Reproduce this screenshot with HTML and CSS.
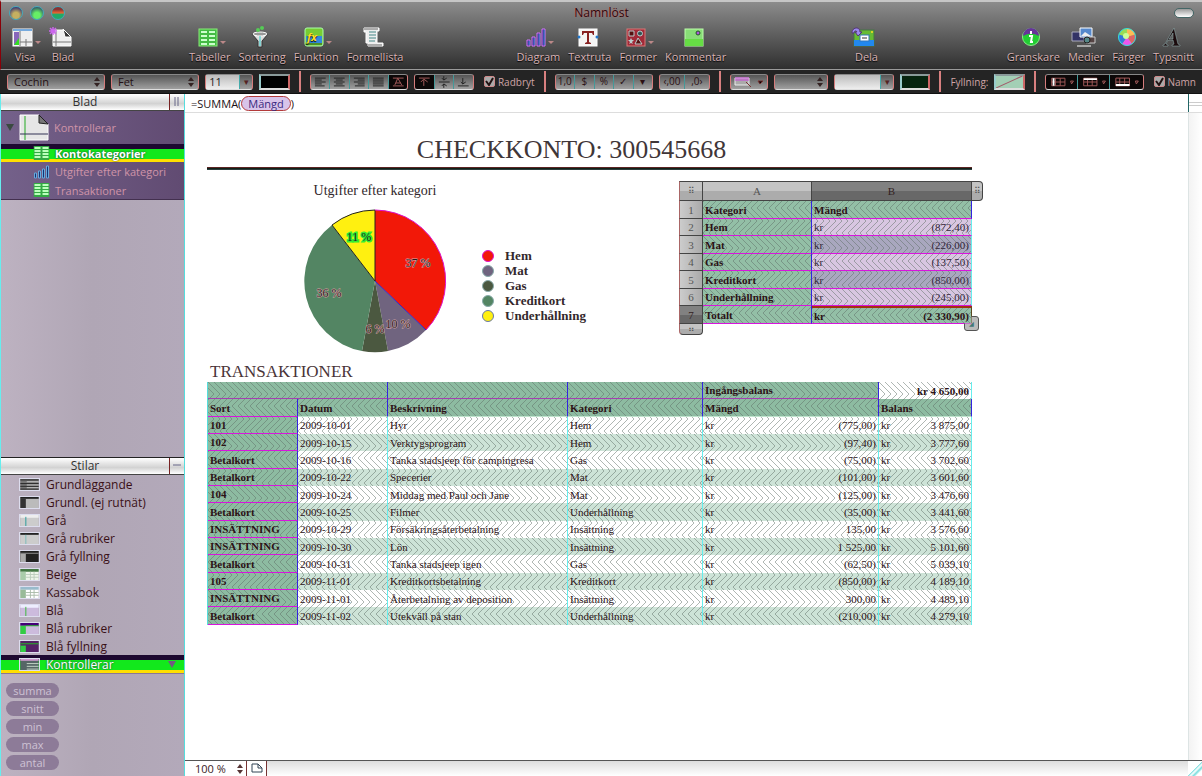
FILE: index.html
```
<!DOCTYPE html>
<html lang="sv">
<head>
    <meta charset="UTF-8">
    <meta name="viewport" content="width=device-width, initial-scale=1.0">
    <title>Namnlöst</title>
    <link rel="stylesheet" href="styles.css">
</head>
<body>
    <header class="window-head">
        <div class="titlebar">
            <div class="lights">
                <button class="light light-close" aria-label="Stäng"></button>
                <button class="light light-min" aria-label="Minimera"></button>
                <button class="light light-zoom" aria-label="Zooma"></button>
            </div>
            <div class="title">Namnlöst</div>
            <button class="pill-toggle" aria-label="Visa verktygsfält"></button>
        </div>
        <nav class="toolbar">
            <div class="tools tools-wide">
                <button class="tool has-menu">
                    <svg viewBox="0 0 22 22"><rect x="1" y="2" width="19" height="17" fill="#eee" stroke="#fff"/><rect x="1" y="2" width="19" height="2" fill="#7ad"/><rect x="2" y="5" width="5" height="13" fill="#86b"/><path d="M2 18l5-7v7z" fill="#3d2"/><path d="M8 4v15M8 15h12M14 12v7" stroke="#777" fill="none"/></svg>
                    Visa
                </button>
                <button class="tool">
                    <svg viewBox="0 0 22 22"><path d="M3 3h11l7 7v9H3z" fill="#eee" stroke="#fff"/><path d="M13 2l8 8h-6z" fill="#333" stroke="#fff"/><path d="M6 5v14M3 15h18" stroke="#777"/><path d="M3 0v8M-1 4h8M0 1l6 6M6 1L0 7" stroke="#c6e" stroke-width="1.5"/></svg>
                    Blad
                </button>
            </div>
            <span class="spacer"></span>
            <div class="tools">
                <button class="tool has-menu">
                    <svg viewBox="0 0 22 22"><rect x="2" y="2" width="18" height="17" fill="#4b4" stroke="#8e7"/><path d="M4 4h6v2H4zM12 4h6v2h-6zM4 8h6v2H4zM12 8h6v2h-6zM4 12h6v2H4zM12 12h6v2h-6zM4 16h6v2H4zM12 16h6v2h-6z" fill="#cfc"/></svg>
                    Tabeller
                </button>
                <button class="tool">
                    <svg viewBox="0 0 22 22"><path d="M3 7h16l-6 7v6H9v-6z" fill="#ddd" stroke="#333"/><ellipse cx="11" cy="7" rx="7" ry="2" fill="#999" stroke="#fff"/><circle cx="9" cy="3" r="2" fill="#5c5"/><circle cx="13" cy="1" r="2" fill="#5c5"/><path d="M11 9v10" stroke="#3cc"/></svg>
                    Sortering
                </button>
                <button class="tool has-menu">
                    <svg viewBox="0 0 22 22"><rect x="2" y="1" width="18" height="18" rx="2" fill="#7c3" stroke="#afa"/><rect x="3" y="9" width="16" height="7" fill="#38d"/><text x="4" y="14" font-size="11" font-style="italic" font-weight="bold" fill="#fd2">fx</text><path d="M3 17h16" stroke="#252"/></svg>
                    Funktion
                </button>
                <button class="tool">
                    <svg viewBox="0 0 22 22"><path d="M2 1h15v3h-2v12h6v3H6v-3H4V5H2z" fill="#eee" stroke="#fff"/><path d="M7 5h7M7 8h7M7 11h7M7 14h6" stroke="#488"/><path d="M2 2h14M6 18h14" stroke="#666"/></svg>
                    Formellista
                </button>
            </div>
            <span class="spacer"></span>
            <div class="tools">
                <button class="tool has-menu">
                    <svg viewBox="0 0 22 22"><path d="M2 13h3v6H2zM7 10h3v9H7zM12 6h3v13h-3zM17 2h3v17h-3z" fill="#427" stroke="#c7f"/><path d="M4 14v4M9 11v7M14 7v11M19 3v15" stroke="#38d"/></svg>
                    Diagram
                </button>
                <button class="tool">
                    <svg viewBox="0 0 22 22"><rect x="2" y="2" width="18" height="17" fill="#f4f4f4" stroke="#fff"/><path d="M5 4h12v4h-1l-1-2h-3v9l2 1v1H8v-1l2-1V6H7L6 8H5z" fill="#822"/><circle cx="2" cy="10" r="1.5" fill="#27c"/><circle cx="20" cy="10" r="1.5" fill="#27c"/></svg>
                    Textruta
                </button>
                <button class="tool has-menu">
                    <svg viewBox="0 0 22 22"><rect x="2" y="2" width="18" height="17" fill="#a12a38" stroke="#d77"/><path d="M4 4h5v5H4zM13 11l4 6h-7z" fill="#511" stroke="#bcc"/><circle cx="15" cy="6.5" r="2.5" fill="#355" stroke="#bcc"/><path d="M6 11l1 2h2l-2 2 1 2-2-1-2 1 1-2-2-2h2z" fill="#bcc"/></svg>
                    Former
                </button>
                <button class="tool">
                    <svg viewBox="0 0 22 22"><rect x="2" y="2" width="18" height="17" fill="#8d7" stroke="#bfa"/><path d="M2 12h18v7H2z" fill="#6d4"/><circle cx="15" cy="6" r="2" fill="#a5d" stroke="#252"/></svg>
                    Kommentar
                </button>
            </div>
            <span class="spacer spacer-wide"></span>
            <div class="tools">
                <button class="tool">
                    <svg viewBox="0 0 22 22"><rect x="1" y="3" width="20" height="16" fill="#6b3" stroke="#474"/><rect x="1" y="13" width="20" height="6" fill="#28e"/><rect x="7" y="8" width="9" height="6" fill="#fff" stroke="#37b"/><path d="M9 11h5" stroke="#333"/><path d="M-1 6c0-6 8-7 8-1h2L5 9 2 5h2c-1-2-3-1-3 1z" fill="#98e" stroke="#537"/><circle cx="19" cy="5" r="1" fill="#fd2"/></svg>
                    Dela
                </button>
            </div>
            <span class="spacer spacer-wide"></span>
            <div class="tools">
                <button class="tool">
                    <svg viewBox="0 0 22 22"><circle cx="11" cy="10" r="8.5" fill="#2c3" stroke="#8e8"/><path d="M3 9a8 8 0 0 1 16 0q-8-5-16 0z" fill="#639"/><path d="M11 4v3M9 9h3l-1 6h2" stroke="#fff" stroke-width="2" fill="none"/></svg>
                    Granskare
                </button>
                <button class="tool">
                    <svg viewBox="0 0 22 22"><path d="M-1 5h12v9H-1z" fill="#336" stroke="#aab"/><path d="M7 1h12v9H7z" fill="#58c" stroke="#fff"/><path d="M8 9l4-4 6 4z" fill="#eee"/><path d="M13 10h9v6h-9z" fill="#544" stroke="#ccc"/><path d="M4 19h14" stroke="#fff"/><circle cx="14" cy="13" r="3" fill="#588" stroke="#222"/></svg>
                    Medier
                </button>
                <button class="tool">
                    <svg viewBox="0 0 22 22"><circle cx="11" cy="10" r="8.5" fill="#9d5"/><path d="M11 10V1.500a8.500 8.500 0 0 1 8 6z" fill="#fb5"/><path d="M11 10l8-2.500a8.500 8.500 0 0 1-3 9.500z" fill="#d66"/><path d="M11 10l5 7a8.500 8.500 0 0 1-10 0z" fill="#e5e"/><path d="M11 10l-5 7a8.500 8.500 0 0 1-3-9.500z" fill="#37d"/><circle cx="11" cy="10" r="8.500" fill="none" stroke="#3dd"/><circle cx="10" cy="9" r="3" fill="#cf9"/></svg>
                    Färger
                </button>
                <button class="tool">
                    <svg viewBox="0 0 22 22"><path d="M13 1l4 16 2 1v1h-8v-1l2-1-1-4H7l-2 4 2 1v1H2v-1l2-1zm-1 5l-4 6h4z" fill="#1b0b0d" stroke="#9bb" stroke-width=".5"/></svg>
                    Typsnitt
                </button>
            </div>
        </nav>
    </header>

    <div class="formatbar">
        <select class="field font-name" aria-label="Typsnitt"><option>Cochin</option></select>
        <select class="field font-style" aria-label="Stil"><option>Fet</option></select>
        <div class="combo"><input class="size-input" type="text" value="11" aria-label="Storlek"><button class="combo-arrow" aria-label="Välj storlek">▾</button></div>
        <button class="swatch swatch-black" aria-label="Textfärg"></button>
        <span class="divider"></span>
        <div class="segments">
            <button aria-label="Vänster"><svg viewBox="0 0 19 14"><path d="M4 3h11M4 5h7M4 7h11M4 9h7M4 11h10"/></svg></button>
            <button aria-label="Centrera"><svg viewBox="0 0 19 14"><path d="M4 3h11M6 5h7M4 7h11M6 9h7M4 11h11"/></svg></button>
            <button aria-label="Höger"><svg viewBox="0 0 19 14"><path d="M4 3h11M8 5h7M4 7h11M8 9h7M5 11h10"/></svg></button>
            <button aria-label="Marginaljustera"><svg viewBox="0 0 19 14"><path d="M4 3h11M4 5h11M4 7h11M4 9h11M4 11h11"/></svg></button>
            <button class="on" aria-label="Automatisk"><svg viewBox="0 0 19 14"><path d="M4 3h11M4 11h11M6 10l3-7 4 7M7 8h5"/></svg></button>
        </div>
        <div class="segments">
            <button class="on" aria-label="Överkant"><svg viewBox="0 0 19 14"><path d="M4 3h11M9 11V5M6 7l3-3 4 3"/></svg></button>
            <button aria-label="Mitten"><svg viewBox="0 0 19 14"><path d="M4 7h11M9 1v4M7 3l2 2 3-2M9 13V9M7 11l2-2 3 2"/></svg></button>
            <button aria-label="Underkant"><svg viewBox="0 0 19 14"><path d="M4 11h11M9 3v6M7 7l2 2 3-2"/></svg></button>
        </div>
        <label class="check"><input type="checkbox" checked>Radbryt</label>
        <span class="divider"></span>
        <div class="segments">
            <button>1,0</button>
            <button>$</button>
            <button>%</button>
            <button>✓</button>
            <button>▾</button>
        </div>
        <div class="segments segments-wide">
            <button>‹,00</button>
            <button>,0›</button>
        </div>
        <span class="divider"></span>
        <button class="field border-menu" aria-label="Kantlinje"><svg viewBox="0 0 34 12"><path d="M3 2h14v7H3z" fill="#aaa" stroke="#eee"/><path d="M3 2h14M3 4h14" stroke="#c4d"/><path d="M14 6l5 5M26 5h5l-3 3z" stroke="#733"/></svg></button>
        <select class="field line-style" aria-label="Linje"><option></option></select>
        <div class="combo"><input class="line-input" type="text" aria-label="Linjebredd"><button class="combo-arrow" aria-label="Välj linjebredd">▾</button></div>
        <button class="swatch swatch-green" aria-label="Linjefärg"></button>
        <span class="divider"></span>
        <span class="fill-label">Fyllning:</span>
        <button class="swatch swatch-fill" aria-label="Fyllning"><svg viewBox="0 0 27 11" preserveAspectRatio="none"><path d="M0 11L27 0" stroke="#a25a6a"/></svg></button>
        <span class="divider"></span>
        <div class="segments segments-table">
            <button class="on" aria-label="Rubrikkolumner"><svg viewBox="0 0 33 14"><path d="M6 3h14v8H6zM10 3v8M15 3v8M6 7h14M26 6h3l-2 3z"/><path class="hot" d="M8 3v8"/></svg></button>
            <button class="on" aria-label="Rubriker"><svg viewBox="0 0 33 14"><path d="M6 3h14v8H6zM10 3v8M15 3v8M6 7h14M26 6h3l-2 3z"/><path class="hot" d="M6 4h14"/></svg></button>
            <button class="on" aria-label="Sidfötter"><svg viewBox="0 0 33 14"><path d="M6 3h14v8H6zM10 3v8M15 3v8M6 7h14M26 6h3l-2 3z"/><path class="hot" d="M6 10h14"/></svg></button>
        </div>
        <label class="check"><input type="checkbox" checked>Namn</label>
    </div>

    <div class="workspace">
        <aside class="sidebar">
            <div class="side-head"><h2>Blad</h2><button aria-label="Ändra bredd"><svg viewBox="0 0 14 14"><path d="M5 2v9M8 2v9"/></svg></button></div>
            <ul class="sheets">
                <li class="sheet-root">
                    <span class="arrow"></span>
                    <svg class="sheet-icon" viewBox="0 0 30 28"><path d="M1 1h19l9 9v16H1z" fill="#e6e6e6" stroke="#fff"/><path d="M20 1l9 9-9-1z" fill="#777" stroke="#222"/><path d="M6 2v24" stroke="#2a2"/><path d="M1 20h28" stroke="#335"/></svg>
                    <span>Kontrollerar</span>
                </li>
                <li class="selected"><svg viewBox="0 0 16 14"><use href="#table-icon"/></svg><span>Kontokategorier</span></li>
                <li><svg viewBox="0 0 16 14"><path d="M1 8h2v5H1zM5 6h2v7H5zM9 4h2v9H9zM13 1h2v12h-2z" fill="#137" stroke="#6ad"/></svg><span>Utgifter efter kategori</span></li>
                <li><svg viewBox="0 0 16 14"><use href="#table-icon"/></svg><span>Transaktioner</span></li>
            </ul>

            <div class="side-head"><h2>Stilar</h2><button aria-label="Dölj stilar"><svg viewBox="0 0 14 14"><path d="M3 6h8"/></svg></button></div>
            <ul class="styles">
                <li><svg viewBox="0 0 20 12"><rect width="20" height="12" fill="#777"/><path d="M0 1h20M0 5h20M0 8h20M0 11h20" stroke="#222"/><path d="M7 3h13M7 6.500h13M7 9.500h13" stroke="#ccc"/></svg>Grundläggande</li>
                <li><svg viewBox="0 0 20 12"><rect width="20" height="12" fill="#bbb"/><path d="M0 1h20" stroke="#222" stroke-width="2"/><rect y="2" width="6" height="10" fill="#333"/></svg>Grundl. (ej rutnät)</li>
                <li><svg viewBox="0 0 20 12"><rect width="20" height="12" fill="#ccc"/><rect width="20" height="3" fill="#eee"/><path d="M6 2v10" stroke="#299"/></svg>Grå</li>
                <li><svg viewBox="0 0 20 12"><rect width="20" height="12" fill="#ccc"/><path d="M0 1h20" stroke="#222" stroke-width="2"/><path d="M6 2v10" stroke="#7bb"/></svg>Grå rubriker</li>
                <li><svg viewBox="0 0 20 12"><rect width="20" height="12" fill="#222"/><rect y="3" width="6" height="9" fill="#aaa"/><path d="M0 2.500h20" stroke="#999"/></svg>Grå fyllning</li>
                <li><svg viewBox="0 0 20 12"><rect width="20" height="12" fill="#eef5ea"/><rect width="20" height="3" fill="#474"/><rect y="3" width="6" height="9" fill="#aca"/><path d="M6 6h14M6 9h14M11 3v9M15 3v9" stroke="#bcb"/></svg>Beige</li>
                <li><svg viewBox="0 0 20 12"><rect width="20" height="12" fill="#fff"/><rect width="20" height="3" fill="#9bc"/><rect y="3" width="6" height="9" fill="#9b9"/><path d="M6 6h14M6 9h14M11 3v9M15 3v9" stroke="#aba"/></svg>Kassabok</li>
                <li><svg viewBox="0 0 20 12"><rect width="20" height="12" fill="#cbd"/><rect width="20" height="3" fill="#eef"/><path d="M6 2v10" stroke="#3b3"/></svg>Blå</li>
                <li><svg viewBox="0 0 20 12"><rect width="20" height="12" fill="#cbd"/><rect width="20" height="3" fill="#407"/><rect y="3" width="6" height="9" fill="#3c4"/><path d="M6 3h14" stroke="#2b2"/></svg>Blå rubriker</li>
                <li><svg viewBox="0 0 20 12"><rect width="20" height="12" fill="#526"/><rect y="5" width="6" height="7" fill="#3c4"/><path d="M0 3h20" stroke="#2b2"/></svg>Blå fyllning</li>
                <li class="selected"><svg viewBox="0 0 20 12"><rect width="20" height="12" fill="#566"/><path d="M0 1h20" stroke="#c9c" stroke-width="2"/><path d="M7 5h13M7 8h13M7 11h13" stroke="#cdc"/></svg>Kontrollerar<span class="arrow"></span></li>
            </ul>
            <div class="functions">
                <button>summa</button>
                <button>snitt</button>
                <button>min</button>
                <button>max</button>
                <button>antal</button>
            </div>
        </aside>

        <main class="document">
            <div class="formula">
                <span>=SUMMA(</span><span class="token">Mängd</span><span>)</span>
                <span class="split"></span>
            </div>
            <div class="canvas">
                <div class="sheet">
                    <h1>CHECKKONTO: 300545668</h1>
                    <div class="overview">
                        <div class="chart">
                            <h3>Utgifter efter kategori</h3>
                            <svg class="pie" viewBox="-72 -72 144 144">
                                <path d="M0 0V-71A71 71 0 0 1 51 49z" fill="#f21808"/>
                                <path d="M0 0L51 49A71 71 0 0 1 13 70z" fill="#70647f"/>
                                <path d="M0 0L13 70A71 71 0 0 1-13 70z" fill="#4b5840"/>
                                <path d="M0 0L-13 70A71 71 0 0 1-43-56z" fill="#538563"/>
                                <path d="M0 0L-43-56A71 71 0 0 1 0-71z" fill="#fff010"/>
                                <path d="M0-71V0L-43-56A71 71 0 0 1 0-71" fill="none" stroke="#222"/>
                                <path d="M0-71A71 71 0 0 1 51 49" fill="none" stroke="#d1c"/>
                                <path d="M0 0L51 49" stroke="#32c"/>
                                <text x="43" y="-14">37 %</text>
                                <text x="23" y="47">10 %</text>
                                <text x="0" y="52">6 %</text>
                                <text x="-46" y="16">36 %</text>
                                <text class="halo" x="-16" y="-40">11 %</text>
                            </svg>
                            <ul class="legend">
                                <li><i class="dot dot-hem"></i>Hem</li>
                                <li><i class="dot dot-mat"></i>Mat</li>
                                <li><i class="dot dot-gas"></i>Gas</li>
                                <li><i class="dot dot-kredit"></i>Kreditkort</li>
                                <li><i class="dot dot-under"></i>Underhållning</li>
                            </ul>
                        </div>

                        <table class="categories">
                            <colgroup><col class="c-num"><col class="c-a"><col class="c-b"><col class="c-tail"></colgroup>
                            <tr class="letters"><th class="grip">⠿</th><th>A</th><th class="active">B</th><th class="grip tail">⠿</th></tr>
                            <tr><th class="num">1</th><th class="name">Kategori</th><th class="name">Mängd</th></tr>
                            <tr><th class="num">2</th><th class="name">Hem</th><td><div class="money"><span>kr</span><span>(872,40)</span></div></td></tr>
                            <tr><th class="num">3</th><th class="name">Mat</th><td><div class="money"><span>kr</span><span>(226,00)</span></div></td></tr>
                            <tr><th class="num">4</th><th class="name">Gas</th><td><div class="money"><span>kr</span><span>(137,50)</span></div></td></tr>
                            <tr><th class="num">5</th><th class="name">Kreditkort</th><td><div class="money"><span>kr</span><span>(850,00)</span></div></td></tr>
                            <tr><th class="num">6</th><th class="name">Underhållning</th><td><div class="money"><span>kr</span><span>(245,00)</span></div></td></tr>
                            <tr class="total"><th class="num active">7</th><th class="name">Totalt</th><td><div class="money"><span>kr</span><span>(2 330,90)</span></div><span class="handle">◢</span></td></tr>
                            <tr class="foot"><th class="grip">⠶</th></tr>
                        </table>
                    </div>

                    <h2 class="table-title">TRANSAKTIONER</h2>
                    <table class="transactions">
                        <colgroup><col class="t-sort"><col class="t-date"><col class="t-desc"><col class="t-cat"><col class="t-sum"><col class="t-bal"></colgroup>
                        <tr class="head"><th colspan="2"></th><th></th><th></th><th>Ingångsbalans</th><td class="opening">kr 4 650,00</td></tr>
                        <tr class="head"><th>Sort</th><th>Datum</th><th>Beskrivning</th><th>Kategori</th><th>Mängd</th><th>Balans</th></tr>
                        <tr><th>101</th><td>2009-10-01</td><td>Hyr</td><td>Hem</td><td><div class="money"><span>kr</span><span>(775,00)</span></div></td><td><div class="money"><span>kr</span><span>3 875,00</span></div></td></tr>
                        <tr><th>102</th><td>2009-10-15</td><td>Verktygsprogram</td><td>Hem</td><td><div class="money"><span>kr</span><span>(97,40)</span></div></td><td><div class="money"><span>kr</span><span>3 777,60</span></div></td></tr>
                        <tr><th>Betalkort</th><td>2009-10-16</td><td>Tanka stadsjeep för campingresa</td><td>Gas</td><td><div class="money"><span>kr</span><span>(75,00)</span></div></td><td><div class="money"><span>kr</span><span>3 702,60</span></div></td></tr>
                        <tr><th>Betalkort</th><td>2009-10-22</td><td>Specerier</td><td>Mat</td><td><div class="money"><span>kr</span><span>(101,00)</span></div></td><td><div class="money"><span>kr</span><span>3 601,60</span></div></td></tr>
                        <tr><th>104</th><td>2009-10-24</td><td>Middag med Paul och Jane</td><td>Mat</td><td><div class="money"><span>kr</span><span>(125,00)</span></div></td><td><div class="money"><span>kr</span><span>3 476,60</span></div></td></tr>
                        <tr><th>Betalkort</th><td>2009-10-25</td><td>Filmer</td><td>Underhållning</td><td><div class="money"><span>kr</span><span>(35,00)</span></div></td><td><div class="money"><span>kr</span><span>3 441,60</span></div></td></tr>
                        <tr><th>INSÄTTNING</th><td>2009-10-29</td><td>Försäkringsåterbetalning</td><td>Insättning</td><td><div class="money"><span>kr</span><span>135,00</span></div></td><td><div class="money"><span>kr</span><span>3 576,60</span></div></td></tr>
                        <tr><th>INSÄTTNING</th><td>2009-10-30</td><td>Lön</td><td>Insättning</td><td><div class="money"><span>kr</span><span>1 525,00</span></div></td><td><div class="money"><span>kr</span><span>5 101,60</span></div></td></tr>
                        <tr><th>Betalkort</th><td>2009-10-31</td><td>Tanka stadsjeep igen</td><td>Gas</td><td><div class="money"><span>kr</span><span>(62,50)</span></div></td><td><div class="money"><span>kr</span><span>5 039,10</span></div></td></tr>
                        <tr><th>105</th><td>2009-11-01</td><td>Kreditkortsbetalning</td><td>Kreditkort</td><td><div class="money"><span>kr</span><span>(850,00)</span></div></td><td><div class="money"><span>kr</span><span>4 189,10</span></div></td></tr>
                        <tr><th>INSÄTTNING</th><td>2009-11-01</td><td>Återbetalning av deposition</td><td>Insättning</td><td><div class="money"><span>kr</span><span>300,00</span></div></td><td><div class="money"><span>kr</span><span>4 489,10</span></div></td></tr>
                        <tr><th>Betalkort</th><td>2009-11-02</td><td>Utekväll på stan</td><td>Underhållning</td><td><div class="money"><span>kr</span><span>(210,00)</span></div></td><td><div class="money"><span>kr</span><span>4 279,10</span></div></td></tr>
                    </table>
                </div>
                <div class="scroll-y"></div>
            </div>
            <div class="statusbar">
                <button class="zoom">100 %<svg viewBox="0 0 8 10"><path d="M1 4l3-4 3 4zM1 6l3 4 3-4z" fill="#533"/></svg></button>
                <button class="page-view" aria-label="Utskriftsvy"><svg viewBox="0 0 12 10"><path d="M1 1h6l4 4v4H1zM7 1v4h4" fill="none" stroke="#345"/></svg></button>
                <span class="scroll-x"></span>
                <span class="resize"></span>
            </div>
        </main>
    </div>

    <svg class="defs" width="0" height="0">
        <symbol id="table-icon" viewBox="0 0 16 14"><rect width="16" height="14" fill="#3a4"/><path d="M1 2h6M9 2h6M1 5h6M9 5h6M1 8h6M9 8h6M1 11h6M9 11h6" stroke="#bfb" stroke-width="2"/></symbol>
    </svg>
</body>
</html>
```
FILE: styles.css
```
* {
    box-sizing: border-box;
}

body {
    margin: 0;
    height: 100vh;
    display: flex;
    flex-direction: column;
    overflow: hidden;
    background: #fff;
    color: #1c1216;
    font-family: "Open Sans", "Noto Sans", sans-serif;
    font-size: 12px;
}

button, input, select {
    font-family: inherit;
    font-size: 11px;
    margin: 0;
    padding: 0;
    border: none;
    background: none;
    color: inherit;
}

ul {
    list-style: none;
    margin: 0;
    padding: 0;
}

h1, h2, h3 {
    margin: 0;
    font-weight: normal;
}

.defs {
    position: absolute;
}

/* window head */
.window-head {
    height: 70px;
    border-top: 2px solid #c6c6c6;
    border-bottom: 1px solid #9a9a9a;
    border-left: 1px solid #8a0008;
    background: linear-gradient(#8c8c8c, #2f2f2f);
}

.titlebar {
    display: grid;
    grid-template-columns: 1fr auto 1fr;
    align-items: center;
    height: 21px;
    padding: 0 8px;
}

.lights {
    display: flex;
    gap: 7px;
}

.light {
    width: 14px;
    height: 14px;
    border-radius: 50%;
    border: 1px solid #4ab;
}

.light-close {
    background: radial-gradient(circle at 50% 70%, #c4b060 30%, #3c3470 80%);
}

.light-min {
    background: radial-gradient(circle at 50% 70%, #6e6 30%, #356 80%);
}

.light-zoom {
    background: linear-gradient(#833 20%, #e63 50%, #2a6 60%);
}

.title {
    font-size: 12px;
    color: #240a0e;
    text-shadow: 0 0 1px #e66;
}

.pill-toggle {
    justify-self: end;
    width: 20px;
    height: 10px;
    border-radius: 5px;
    border: 1px solid #466;
    background: linear-gradient(#999, #fff);
}

.toolbar {
    display: flex;
    padding: 4px 8px 0 11px;
}

.tools {
    display: flex;
    gap: 8px;
}

.tools-wide {
    gap: 12px;
}

.spacer {
    flex: 8;
}

.spacer-wide {
    flex: 9;
}

.tool {
    position: relative;
    display: flex;
    flex-direction: column;
    align-items: center;
    line-height: 16px;
    color: #d8b2b4;
    text-shadow: 0 1px 1px #000;
}

.tool svg {
    width: 22px;
    height: 22px;
    margin-right: 4px;
    overflow: visible;
}

.has-menu::after {
    content: "";
    position: absolute;
    top: 14px;
    left: 50%;
    margin-left: 10px;
    border: 3px solid transparent;
    border-top-color: #b88;
}

/* format bar */
.formatbar {
    display: flex;
    align-items: center;
    gap: 6px;
    height: 24px;
    padding: 0 6px 0 7px;
    background: #242424;
    border-bottom: 1px solid #111;
}

.divider {
    width: 2px;
    height: 21px;
    margin: 0 3px;
    background: #d88080;
}

.field, .segments, .combo, .swatch {
    height: 16px;
    border: 1px solid #999;
    border-color: #888 #d57c7c #ddd #d57c7c;
    border-radius: 3px;
    background: linear-gradient(#555, #a0a0a0);
}

.field {
    appearance: none;
    padding: 0 6px;
    color: #241015;
    line-height: 13px;
}

select.field {
    background:
        url("data:image/svg+xml,%3Csvg xmlns='http://www.w3.org/2000/svg' width='6' height='10'%3E%3Cpath d='M0 4l3-4 3 4zM0 6l3 4 3-4z' fill='%23322'/%3E%3C/svg%3E") no-repeat right 4px center,
        linear-gradient(#555, #a0a0a0);
}

.font-name {
    width: 100px;
}

.font-style {
    width: 90px;
}

.line-style {
    width: 55px;
}

.combo {
    display: flex;
}

.combo input {
    background: linear-gradient(#bbb, #eee);
    color: #222;
}

.size-input {
    width: 33px;
    padding: 0 3px;
}

.line-input {
    width: 45px;
}

.combo-arrow {
    width: 13px;
    border-left: 1px solid #4aa;
    color: #522;
    font-size: 9px;
    line-height: 12px;
}

.swatch {
    width: 31px;
    border: 2px solid #999;
    border-color: #8a9a9a #c66 #ddd #9cc;
    border-radius: 0;
}

.swatch svg {
    display: block;
    width: 100%;
    height: 100%;
}

.swatch-black {
    background: #000;
}

.swatch-green {
    background: #06240f;
}

.swatch-fill {
    background: #a3cfb5;
}

.segments {
    display: flex;
    overflow: hidden;
}

.segments button {
    width: 20px;
    color: #2b1014;
    font-size: 10px;
    line-height: 13px;
    border-right: 1px solid #499;
}

.segments button:last-child {
    width: 19px;
    border-right: none;
}

.segments.segments-wide button {
    width: 25px;
}

.segments.segments-table button {
    width: 33px;
}

.segments svg {
    display: block;
    width: 100%;
    height: 14px;
    fill: none;
    stroke: #222;
}

.segments .on {
    background: #0c0808;
}

.segments .on svg {
    stroke: #a35a5a;
}

.segments .on .hot {
    stroke: #fff;
    stroke-width: 2;
}

.check {
    display: flex;
    align-items: center;
    gap: 3px;
    margin-left: 4px;
    font-size: 10px;
    color: #cfa4a6;
}

.check input {
    appearance: none;
    width: 11px;
    height: 11px;
    border: 1px solid #c88;
    border-radius: 2px;
    background: #aaa url("data:image/svg+xml,%3Csvg xmlns='http://www.w3.org/2000/svg' width='9' height='9'%3E%3Cpath d='M1 4l3 4 4-7' fill='none' stroke='%23211' stroke-width='2'/%3E%3C/svg%3E") center no-repeat;
}

.fill-label {
    font-size: 10px;
    color: #cfa4a6;
}

.border-menu {
    width: 38px;
    padding: 0 1px;
}

.border-menu svg {
    display: block;
    width: 34px;
    height: 12px;
}

/* workspace */
.workspace {
    flex: 1;
    display: flex;
    min-height: 0;
}

.sidebar {
    width: 185px;
    display: flex;
    flex-direction: column;
    border-left: 1px solid #6ee;
    border-right: 1px solid #5dd;
    background: linear-gradient(90deg, #bdb2c1, #b0a6b5 50%, #b3a9ba);
}

.side-head {
    display: flex;
    height: 17px;
    border-bottom: 1px solid #444;
    background: linear-gradient(#fff, #d2d2d2 60%, #fff);
}

.side-head h2 {
    flex: 1;
    font-size: 12px;
    line-height: 16px;
    text-align: center;
    color: #333;
}

.side-head button {
    width: 15px;
    border-left: 1px solid #722;
}

.side-head svg {
    display: block;
    width: 14px;
    height: 14px;
    stroke: #668;
}

.sheets {
    flex: 1;
    font-size: 11px;
}

.sheets li {
    display: flex;
    align-items: center;
    gap: 5px;
    height: 19px;
    padding-left: 32px;
    background: linear-gradient(90deg, #74618a, #614b72);
    color: #cf94a8;
}

.sheets li:last-child {
    border-bottom: 1px solid #43304f;
}

.sheets li svg {
    width: 17px;
    height: 14px;
}

.sheets .sheet-root {
    height: 33px;
    padding-left: 5px;
}

.sheets .sheet-icon {
    width: 30px;
    height: 28px;
}

.arrow {
    border: 4px solid transparent;
    border-top: 7px solid #3a4a40;
    border-bottom: none;
}

.sheets .selected, .styles .selected {
    background: linear-gradient(#1d0930 5px, #12e81c 5px, #12e81c 15px, #ffdf00 15px);
    color: #fff;
    text-shadow: 0 0 2px #224;
}

.sheets .selected {
    font-weight: bold;
    height: 18px;
}

.sidebar .side-head:not(:first-child) {
    height: 18px;
    border-top: 1px solid #222;
}

.styles li {
    display: flex;
    align-items: center;
    gap: 6px;
    height: 18px;
    padding-left: 18px;
    color: #3a1016;
}

.styles svg {
    width: 21px;
    height: 13px;
    border: 1px solid #dde;
}

.styles .arrow {
    margin-left: auto;
    margin-right: 8px;
    border-top-color: #725a80;
}

.functions {
    display: flex;
    flex-direction: column;
    gap: 3px;
    padding: 9px 5px 6px;
    border-top: 1px solid #8a7794;
}

.functions button {
    width: 53px;
    height: 15px;
    border-radius: 8px;
    background: #8d7b98;
    color: #cdc2d4;
    line-height: 13px;
}

/* document */
.document {
    flex: 1;
    display: flex;
    flex-direction: column;
    min-width: 0;
}

.formula {
    display: flex;
    align-items: center;
    height: 19px;
    padding-left: 6px;
    border-bottom: 1px solid #ddd;
    font-size: 11px;
}

.token {
    padding: 0 6px;
    line-height: 13px;
    border: 1px solid #b33a3a;
    border-radius: 8px;
    background: #d8c4ea;
    color: #3a2a80;
}

.split {
    width: 14px;
    height: 18px;
    margin-left: auto;
    border-left: 1px solid #266;
    background: linear-gradient(transparent 8px, #ccc 8px, #ccc 9px, transparent 9px, transparent 11px, #ccc 11px, #ccc 12px, transparent 12px);
}

.canvas {
    flex: 1;
    display: flex;
    min-height: 0;
    font-family: "Liberation Serif", serif;
}

.sheet {
    flex: 1;
    max-width: 787px;
    padding: 22px 0 0 22px;
}

.scroll-y {
    width: 14px;
    margin-left: auto;
    border-left: 1px solid #dde4e4;
    background: linear-gradient(90deg, #f3f3f3, #fff);
}

h1 {
    position: relative;
    padding: 0 36px 2px 0;
    font-size: 26px;
    line-height: 30px;
    text-align: center;
    color: #3f3638;
}

/* rule under the sheet title */
h1::after {
    content: "";
    position: absolute;
    left: 0;
    right: 0;
    top: 100%;
    height: 3px;
    background: linear-gradient(#5c2424 1px, #102018 1px, #102018 2px, #2c3c3c 2px);
}

.overview {
    display: flex;
    justify-content: space-between;
    align-items: flex-start;
    padding: 14px 0 0 96px;
}

.chart {
    display: grid;
    grid-template-columns: 144px auto;
    column-gap: 35px;
    row-gap: 8px;
}

.chart h3 {
    grid-column: 1;
    font-size: 14px;
    line-height: 20px;
    text-align: center;
    color: #32282c;
}

.pie {
    grid-column: 1;
    width: 144px;
    height: 144px;
}

.pie text {
    font-size: 12px;
    text-anchor: middle;
    fill: #241a1e;
    stroke: #d9a8a8;
    stroke-width: 1px;
    paint-order: stroke;
}

.pie .halo {
    stroke: #3e3;
    stroke-width: 3px;
}

.legend {
    grid-column: 2;
    align-self: center;
    padding-top: 10px;
    font-size: 13px;
    font-weight: bold;
    color: #33282c;
}

.legend li {
    display: flex;
    align-items: center;
    gap: 11px;
    height: 15px;
}

.dot {
    width: 12px;
    height: 12px;
    border-radius: 50%;
    border: 1px solid #8aa;
}

.dot-hem {
    background: #f21808;
    border-color: #d1c;
}

.dot-mat {
    background: #70647f;
}

.dot-gas {
    background: #4b5840;
}

.dot-kredit {
    background: #538563;
}

.dot-under {
    background: #fff010;
    border-color: #67a;
}

/* tables */
table {
    border-spacing: 0;
    table-layout: fixed;
    font-size: 11px;
    line-height: 14px;
    color: #2c1216;
}

th, td {
    padding: 0 2px;
    text-align: left;
    white-space: nowrap;
}

.name, .categories td, .transactions th, .transactions td {
    background-image: url("data:image/svg+xml,%3Csvg xmlns='http://www.w3.org/2000/svg' width='6' height='24'%3E%3Cpath d='M-12 0L0 12L-12 24M-6 0L6 12L-6 24M0 0L12 12L0 24M6 0L18 12L6 24' fill='none' stroke='%23607068' stroke-opacity='.5'/%3E%3C/svg%3E");
}

/* the herringbone runs on from row to row */
tr:nth-child(3n + 2) > * {
    background-position: 0 -17px;
}

tr:nth-child(3n) > * {
    background-position: 0 -10px;
}

.money {
    display: flex;
    justify-content: space-between;
}

.categories {
    width: 304px;
    margin-right: -11px;
}

.c-num {
    width: 24px;
}

.c-a {
    width: 109px;
}

.c-b {
    width: 160px;
}

.c-tail {
    width: 11px;
}

.categories tr {
    height: 17px;
}

.categories tr:nth-child(2n) {
    height: 18px;
}

.categories .letters {
    height: 20px;
}

.letters th, .num, .grip {
    padding: 0;
    border: 1px solid #444;
    border-width: 0 1px 1px 0;
    background: linear-gradient(#c4c4c4 50%, #acacac 50%);
    color: #555;
    font-weight: normal;
    text-align: center;
}

.letters th {
    border-top-width: 1px;
}

.letters th:first-child, .num, .foot .grip {
    border-left: 1px solid #a66;
}

.letters .tail {
    border-radius: 0 4px 4px 0;
}

.letters .active, .num.active {
    background: linear-gradient(#818181 50%, #686868 50%);
    color: #322;
}

.num {
    background: linear-gradient(90deg, #ccc, #aaa);
}

.grip {
    font-size: 9px;
    line-height: 8px;
}

.categories .foot {
    height: 11px;
}

.foot .grip {
    border-radius: 0 0 4px 4px;
}

.categories .name {
    background-color: #93bfa6;
    border-right: 1px solid #3324e0;
    border-bottom: 1px solid #d814dd;
}

.categories td {
    background-color: #d8c6e1;
    border-bottom: 1px solid #d814dd;
    border-right: 1px solid #6ee;
    color: #33263a;
}

.categories tr:nth-child(2n) td {
    background-color: #a9a7bf;
}

.categories tr.total td {
    position: relative;
    background-color: #93bfa6;
    border-top: 2px solid #a33010;
    border-right: 1px solid #5a4a20;
    font-weight: bold;
    color: #2c1216;
}

.categories tr.total:nth-child(2n) td {
    background-color: #93bfa6;
}

.handle {
    position: absolute;
    right: -8px;
    bottom: -8px;
    width: 15px;
    height: 15px;
    border: 1px solid #555;
    border-radius: 3px;
    background: #bbb;
    color: #477;
    font-size: 6px;
    text-align: center;
    z-index: 1;
    clip-path: polygon(50% 0, 100% 0, 100% 100%, 0 100%, 0 50%, 50% 50%);
}

.table-title {
    margin-top: 9px;
    padding-left: 3px;
    font-size: 17px;
    line-height: 20px;
    color: #4a3438;
}

.transactions {
    width: 100%;
    height: 243px;
    border-left: 1px solid #5dd;
}

.t-sort, .t-date {
    width: 90px;
}

.t-desc {
    width: 180px;
}

.t-cat {
    width: 135px;
}

.t-sum {
    width: 176px;
}

.transactions th {
    background-color: #8dbba1;
    border-right: 1px solid #3324e0;
    border-bottom: 1px solid #d814dd;
}

.transactions .head th {
    border-bottom-color: #a33fb0;
}

.transactions .head:nth-child(2) th {
    border-bottom-color: #bfe3cd;
}

.transactions .head:nth-child(2) th:first-child {
    border-bottom-color: #d814dd;
}

.transactions td {
    border-right: 1px solid #6ee;
}

.transactions tr:nth-child(2n) td {
    background-color: #cde3d7;
}

.transactions .opening {
    font-weight: bold;
    text-align: right;
}

/* status bar */
.statusbar {
    display: flex;
    height: 16px;
    border-top: 1px solid #555;
}

.zoom {
    display: flex;
    align-items: center;
    gap: 10px;
    width: 62px;
    padding-left: 10px;
    border-right: 1px solid #733;
    color: #3a1a1e;
    line-height: 14px;
}

.zoom svg {
    width: 8px;
    height: 10px;
}

.page-view {
    width: 20px;
    border-right: 1px solid #733;
}

.page-view svg {
    width: 12px;
    height: 10px;
}

.scroll-x {
    flex: 1;
    background: linear-gradient(#ddd, #fff);
}

.resize {
    width: 14px;
    background: linear-gradient(135deg, #fff 50%, #7dd 50%, #fff 60%, #7dd 70%, #fff 80%);
}
```
